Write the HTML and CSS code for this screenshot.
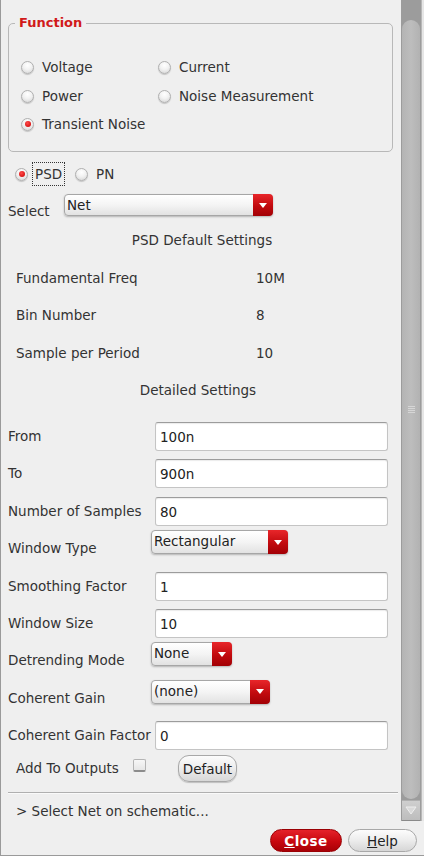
FILE: index.html
```html
<!DOCTYPE html>
<html>
<head>
<meta charset="utf-8">
<link rel="stylesheet" href="styles.css">
</head>
<body>
<div class="window">
  <div class="main">
    <div class="content">
      <fieldset class="group">
        <legend>Function</legend>
        <div class="radio-grid">
          <div class="radio"><span class="dot"></span>Voltage</div>
          <div class="radio"><span class="dot"></span>Current</div>
          <div class="radio"><span class="dot"></span>Power</div>
          <div class="radio"><span class="dot"></span>Noise Measurement</div>
          <div class="radio"><span class="dot on"></span>Transient Noise</div>
        </div>
      </fieldset>

      <div class="psd-row">
        <span class="dot on"></span><span class="focus">PSD</span>
        <span class="dot pn-dot"></span><span class="pn">PN</span>
      </div>

      <div class="select-row">
        <span class="select-label">Select</span>
        <div class="dropdown w-select"><span class="val">Net</span><span class="arrow"><svg width="8" height="5" viewBox="0 0 8 5"><path d="M0 0h8L4 5z" fill="#fff"/></svg></span></div>
      </div>

      <div class="info">
        <div class="info-title psd-title">PSD Default Settings</div>
        <div class="info-row"><span class="info-label">Fundamental Freq</span><span>10M</span></div>
        <div class="info-row"><span class="info-label">Bin Number</span><span>8</span></div>
        <div class="info-row"><span class="info-label">Sample per Period</span><span>10</span></div>
        <div class="info-title">Detailed Settings</div>
      </div>

      <div class="form">
        <div class="frow"><span class="flabel">From</span><div class="field">100n</div></div>
        <div class="frow"><span class="flabel">To</span><div class="field">900n</div></div>
        <div class="frow"><span class="flabel">Number of Samples</span><div class="field">80</div></div>
        <div class="frow"><span class="flabel">Window Type</span><div class="dropdown w-type"><span class="val">Rectangular</span><span class="arrow"><svg width="8" height="5" viewBox="0 0 8 5"><path d="M0 0h8L4 5z" fill="#fff"/></svg></span></div></div>
        <div class="frow"><span class="flabel">Smoothing Factor</span><div class="field">1</div></div>
        <div class="frow"><span class="flabel">Window Size</span><div class="field">10</div></div>
        <div class="frow"><span class="flabel">Detrending Mode</span><div class="dropdown w-detr"><span class="val">None</span><span class="arrow"><svg width="8" height="5" viewBox="0 0 8 5"><path d="M0 0h8L4 5z" fill="#fff"/></svg></span></div></div>
        <div class="frow"><span class="flabel">Coherent Gain</span><div class="dropdown w-coh"><span class="val">(none)</span><span class="arrow"><svg width="8" height="5" viewBox="0 0 8 5"><path d="M0 0h8L4 5z" fill="#fff"/></svg></span></div></div>
        <div class="frow"><span class="flabel">Coherent Gain Factor</span><div class="field">0</div></div>
      </div>

      <div class="add-row">
        <span class="add-label">Add To Outputs</span>
        <span class="check"></span>
        <span class="btn-default">Default</span>
      </div>

      <div class="separator"></div>
      <div class="status">&gt; Select Net on schematic...</div>
    </div>
    <div class="scrollbar">
      <div class="trough">
        <div class="thumb"><span class="grip"></span></div>
      </div>
      <div class="arrow-down"><svg width="12" height="9" viewBox="0 0 12 9"><path d="M1 1h10L6 8z" fill="#d9d9d9" stroke="#eeeeee" stroke-width="1"/></svg></div>
    </div>
    <div class="edge"></div>
  </div>
  <div class="footer">
    <span class="btn btn-close"><u>C</u>lose</span>
    <span class="btn btn-help"><u>H</u>elp</span>
  </div>
</div>
</body>
</html>
```

FILE: styles.css
```css
html, body {
  margin: 0;
  padding: 0;
}
body {
  background: #efefef;
  font-family: "DejaVu Sans", "Liberation Sans", sans-serif;
  font-size: 13.5px;
  color: #333333;
  white-space: nowrap;
}
.window {
  width: 424px;
  height: 856px;
  box-sizing: border-box;
  border-left: 1px solid #9a9a9a;
  border-bottom: 1px solid #9a9a9a;
  display: flex;
  flex-direction: column;
}
.main {
  display: flex;
  height: 821px;
}
.content {
  width: 400px;
  box-sizing: border-box;
  padding: 0 13px 0 7px;
  display: flex;
  flex-direction: column;
}

/* group box */
.group {
  margin: 15px -5px 0 0;
  padding: 0 0 13px 12px;
  border: 1px solid #b8b8b8;
  border-radius: 5px;
  min-width: 0;
}
.group legend {
  margin-left: -6px;
  padding: 0 4px;
  color: #d11a1a;
  font-weight: bold;
  font-size: 13px;
  line-height: 16px;
}
.radio-grid {
  margin-top: 21px;
  display: grid;
  grid-template-columns: 137px 1fr;
  grid-template-rows: 30px 28px 28px;
  align-items: center;
}
.radio {
  display: flex;
  align-items: center;
  gap: 8px;
}
.dot {
  width: 13px;
  height: 13px;
  box-sizing: border-box;
  border-radius: 50%;
  border: 1px solid #b0b0b0;
  background: radial-gradient(circle at 50% 30%, #ffffff 0%, #f2f2f2 45%, #d2d2d2 100%);
  box-shadow: 0 1px 1px rgba(0,0,0,0.18);
  display: inline-flex;
  align-items: center;
  justify-content: center;
  flex: none;
}
.dot.on::after {
  content: "";
  width: 6px;
  height: 6px;
  border-radius: 50%;
  background: radial-gradient(circle at 40% 35%, #ff4a4a, #c80000);
}

/* psd row */
.psd-row {
  margin-top: 10px;
  height: 24px;
  display: flex;
  align-items: center;
  padding-left: 7px;
}
.focus {
  margin-left: 4px;
  padding: 3px 2px;
  border: 1px dotted #333;
  line-height: 16px;
}
.pn-dot {
  margin-left: 10px;
}
.pn {
  margin-left: 8px;
}

/* select row */
.select-row {
  margin-top: 8px;
  height: 22px;
  display: flex;
}
.select-label {
  width: 56px;
  align-self: flex-end;
  position: relative;
  top: 3px;
}
.dropdown {
  height: 24px;
  box-sizing: border-box;
  display: flex;
  border: 1px solid #a6a6a6;
  border-radius: 4px;
  background: linear-gradient(#ffffff, #f4f4f4 50%, #e2e2e2);
  box-shadow: 0 1px 2px rgba(0,0,0,0.25);
  color: #222;
}
.dropdown .val {
  flex: 1;
  padding: 0 2px;
  line-height: 20px;
}
.dropdown .arrow {
  width: 20px;
  margin: -1px -1px -1px 0;
  border-radius: 0 4px 4px 0;
  background: linear-gradient(#e8262a, #c10a0e 55%, #a20005);
  display: flex;
  align-items: center;
  justify-content: center;
}
.w-select { width: 209px; height: 22px; }
.w-type { width: 137px; }
.w-detr { width: 81px; }
.w-coh { width: 119px; }

/* info block */
.info {
  margin-top: 5.25px;
}
.info-title,
.info-row {
  height: 37.5px;
  display: flex;
  align-items: center;
}
.info-title {
  justify-content: center;
}
.psd-title {
  padding-left: 8px;
}
.info-row {
  padding-left: 8px;
}
.info-label {
  width: 240px;
}

/* form */
.form {
  margin-top: 13.25px;
  display: flex;
  flex-direction: column;
}
.frow {
  height: 37.375px;
  display: flex;
  align-items: flex-start;
}
.flabel {
  width: 143px;
  flex: none;
  line-height: 29px;
}
.field {
  margin-left: 4px;
  flex: 1;
  height: 29px;
  box-sizing: border-box;
  border: 1px solid #c4c4c4;
  border-top-color: #9c9c9c;
  border-radius: 3px;
  background: #ffffff;
  box-shadow: inset 0 1px 1px rgba(0,0,0,0.08);
  padding-left: 4px;
  line-height: 28px;
  color: #222;
}
.frow .dropdown {
  margin-top: -4px;
}

/* add row */
.add-row {
  height: 30px;
  display: flex;
  align-items: flex-start;
  padding-left: 8px;
}
.add-label {
  width: 117px;
  line-height: 20px;
}
.check {
  width: 13px;
  height: 13px;
  box-sizing: border-box;
  margin-top: 1px;
  border: 1px solid #b4b4b4;
  border-bottom: 2px solid #8c8c8c;
  border-radius: 2px;
  background: linear-gradient(#f7f7f7, #e6e6e6);
}
.btn-default {
  margin-left: 32px;
  margin-top: -3px;
  width: 59px;
  height: 27px;
  box-sizing: border-box;
  border: 1px solid #a8a8a8;
  border-radius: 11px;
  background: linear-gradient(#fcfcfc, #ececec 50%, #d8d8d8);
  box-shadow: 0 1px 1px rgba(0,0,0,0.2);
  display: flex;
  align-items: center;
  justify-content: center;
  color: #222;
}

.separator {
  margin: 4px -10px 0 0;
  border-top: 1px solid #b0b0b0;
  border-bottom: 1px solid #fafafa;
}
.status {
  margin-top: 8px;
  padding-left: 8px;
  line-height: 18px;
}

/* scrollbar */
.scrollbar {
  width: 20px;
  display: flex;
  flex-direction: column;
  background: #9c9c9c;
}
.trough {
  flex: 1;
  padding-top: 20px;
  padding-bottom: 1px;
  display: flex;
  flex-direction: column;
}
.thumb {
  flex: 1;
  margin: 0 1px;
  border-radius: 10px;
  background: linear-gradient(90deg, #b4b4b4, #bdbdbd 50%, #b2b2b2);
  display: flex;
  align-items: center;
  justify-content: center;
}
.grip {
  width: 7px;
  height: 7px;
  background: repeating-linear-gradient(#d6d6d6 0 1px, transparent 1px 2px);
}
.arrow-down {
  height: 19px;
  margin: 0 1px;
  background: linear-gradient(#cfcfcf, #bdbdbd);
  border-top: 1px solid #b0b0b0;
  border-bottom: 1px solid #8a8a8a;
  display: flex;
  align-items: center;
  justify-content: center;
}
.edge {
  width: 3px;
  background: #e6e6e6;
  border-left: 1px solid #b8b8b8;
  box-sizing: border-box;
}

/* footer */
.footer {
  flex: 1;
  display: flex;
  justify-content: flex-end;
  align-items: flex-start;
  gap: 6px;
  padding: 8px 7px 0 0;
}
.btn {
  height: 23px;
  box-sizing: border-box;
  border-radius: 12px;
  display: flex;
  align-items: center;
  justify-content: center;
}
.btn-close {
  width: 72px;
  background: linear-gradient(#e5222a, #c8080f 55%, #a80006);
  border: 1px solid #9a0004;
  color: #ffffff;
  font-weight: bold;
  letter-spacing: 0.5px;
}
.btn-help {
  width: 69px;
  background: linear-gradient(#fcfcfc, #ececec 50%, #d6d6d6);
  border: 1px solid #a8a8a8;
  color: #222;
}
```
